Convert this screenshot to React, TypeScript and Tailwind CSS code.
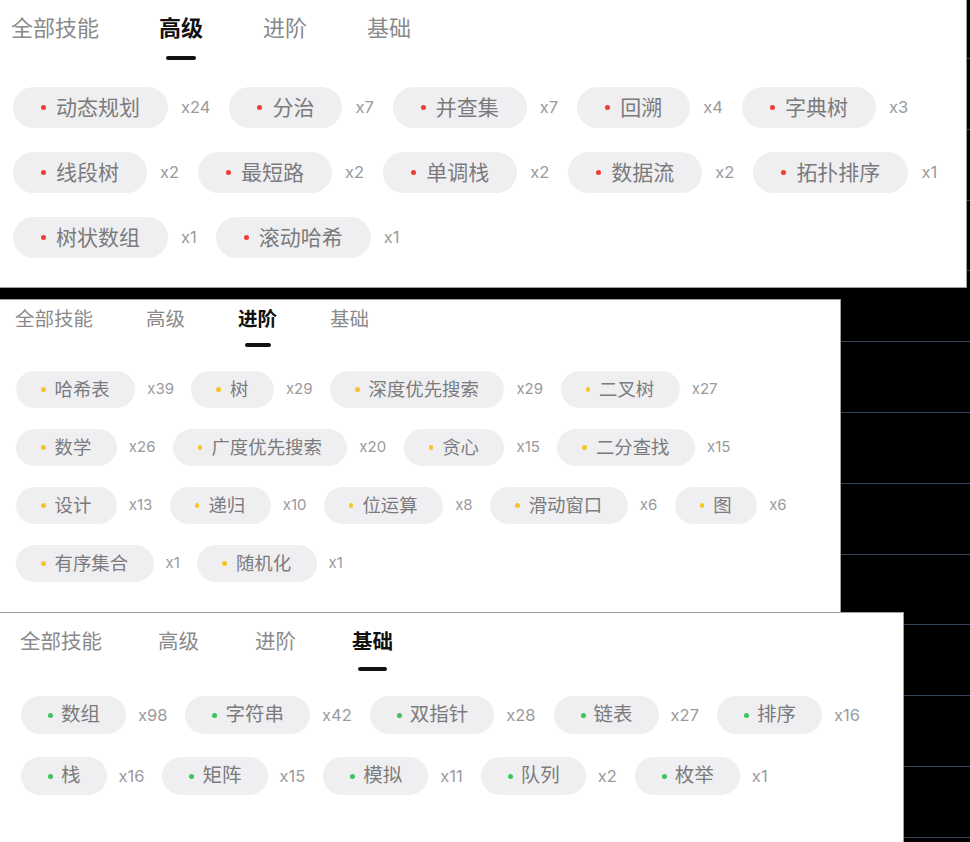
import React from "react";

type Level = "advanced" | "intermediate" | "basic";

type Skill = { name: string; count: number };

const TABS: { key: Level | "all"; label: string }[] = [
  { key: "all", label: "全部技能" },
  { key: "advanced", label: "高级" },
  { key: "intermediate", label: "进阶" },
  { key: "basic", label: "基础" },
];

const SKILLS: Record<Level, Skill[]> = {
  advanced: [
    { name: "动态规划", count: 24 },
    { name: "分治", count: 7 },
    { name: "并查集", count: 7 },
    { name: "回溯", count: 4 },
    { name: "字典树", count: 3 },
    { name: "线段树", count: 2 },
    { name: "最短路", count: 2 },
    { name: "单调栈", count: 2 },
    { name: "数据流", count: 2 },
    { name: "拓扑排序", count: 1 },
    { name: "树状数组", count: 1 },
    { name: "滚动哈希", count: 1 },
  ],
  intermediate: [
    { name: "哈希表", count: 39 },
    { name: "树", count: 29 },
    { name: "深度优先搜索", count: 29 },
    { name: "二叉树", count: 27 },
    { name: "数学", count: 26 },
    { name: "广度优先搜索", count: 20 },
    { name: "贪心", count: 15 },
    { name: "二分查找", count: 15 },
    { name: "设计", count: 13 },
    { name: "递归", count: 10 },
    { name: "位运算", count: 8 },
    { name: "滑动窗口", count: 6 },
    { name: "图", count: 6 },
    { name: "有序集合", count: 1 },
    { name: "随机化", count: 1 },
  ],
  basic: [
    { name: "数组", count: 98 },
    { name: "字符串", count: 42 },
    { name: "双指针", count: 28 },
    { name: "链表", count: 27 },
    { name: "排序", count: 16 },
    { name: "栈", count: 16 },
    { name: "矩阵", count: 15 },
    { name: "模拟", count: 11 },
    { name: "队列", count: 2 },
    { name: "枚举", count: 1 },
  ],
};

// each screenshot was taken at a slightly different scale
const SIZES = {
  advanced: {
    panel: "w-[967px] h-[288px] border-r border-b",
    tabs: "pl-[11px] pt-[18px] gap-[60px]",
    tab: "text-[22px] leading-[22px]",
    bar: "mt-[16px] w-[30px]",
    list: "mt-[27px] pl-[13px] gap-y-[24px]",
    item: "mr-[19px]",
    chip: "h-[41px] pl-[28px] pr-[28px] text-[21px]",
    dot: "w-[5px] h-[5px] mr-[10px] bg-[#ee3d31]",
    count: "ml-[13px] text-[16.5px]",
  },
  intermediate: {
    panel: "mt-[11px] w-[841px] h-[313px] border-t border-r",
    tabs: "pl-[15px] pt-[9px] gap-[53px]",
    tab: "text-[19.5px] leading-[20px]",
    bar: "mt-[14px] w-[26px]",
    list: "mt-[24px] pl-[16px] gap-y-[21px]",
    item: "mr-[17.5px]",
    chip: "h-[37px] pl-[25px] pr-[25.5px] text-[18.4px]",
    dot: "w-[4.5px] h-[4.5px] mr-[9px] bg-[#f7c325]",
    count: "ml-[12px] text-[15px]",
  },
  basic: {
    panel: "flex-1 w-[904px] border-t border-r",
    tabs: "pl-[20px] pt-[18px] gap-[56px]",
    tab: "text-[20.5px] leading-[21px]",
    bar: "mt-[15px] w-[29px]",
    list: "mt-[25px] pl-[21px] gap-y-[23px]",
    item: "mr-[18px]",
    chip: "h-[38px] pl-[27px] pr-[26px] text-[19.5px]",
    dot: "w-[5px] h-[5px] mr-[8px] bg-[#3ec25c]",
    count: "ml-[12px] text-[16.5px]",
  },
};

const SkillPanel = ({ level }: { level: Level }) => {
  const s = SIZES[level];

  return (
    <section className={`shrink-0 bg-white border-[#9d9d9d] ${s.panel}`}>
      <nav className={`flex items-start ${s.tabs}`}>
        {TABS.map((tab) => {
          const active = tab.key === level;
          return (
            <div key={tab.key} className="flex flex-col items-center">
              <span
                className={`${s.tab} ${active ? "font-semibold text-[#111]" : "text-[#8a8a8a]"}`}
              >
                {tab.label}
              </span>
              {active && <span className={`h-[4px] rounded-full bg-[#111] ${s.bar}`} />}
            </div>
          );
        })}
      </nav>

      <ul className={`flex flex-wrap items-center ${s.list}`}>
        {SKILLS[level].map((skill) => (
          <li key={skill.name} className={`flex items-center ${s.item}`}>
            <span className={`flex items-center rounded-full bg-[#efeff1] text-[#7b7b7d] ${s.chip}`}>
              <span className={`shrink-0 rounded-full ${s.dot}`} />
              {skill.name}
            </span>
            <span className={`font-['Inter',sans-serif] text-[#9a9a9c] ${s.count}`}>
              x{skill.count}
            </span>
          </li>
        ))}
      </ul>
    </section>
  );
};

export default function App() {
  return (
    <div
      className="flex h-[842px] w-[970px] flex-col overflow-hidden bg-black bg-[repeating-linear-gradient(to_bottom,transparent_0px,transparent_58px,#34435c_58px,#34435c_59px,transparent_59px,transparent_70.8px)] font-['Liberation_Sans','Noto_Sans_CJK_SC',sans-serif]"
    >
      <SkillPanel level="advanced" />
      <SkillPanel level="intermediate" />
      <SkillPanel level="basic" />
    </div>
  );
}
